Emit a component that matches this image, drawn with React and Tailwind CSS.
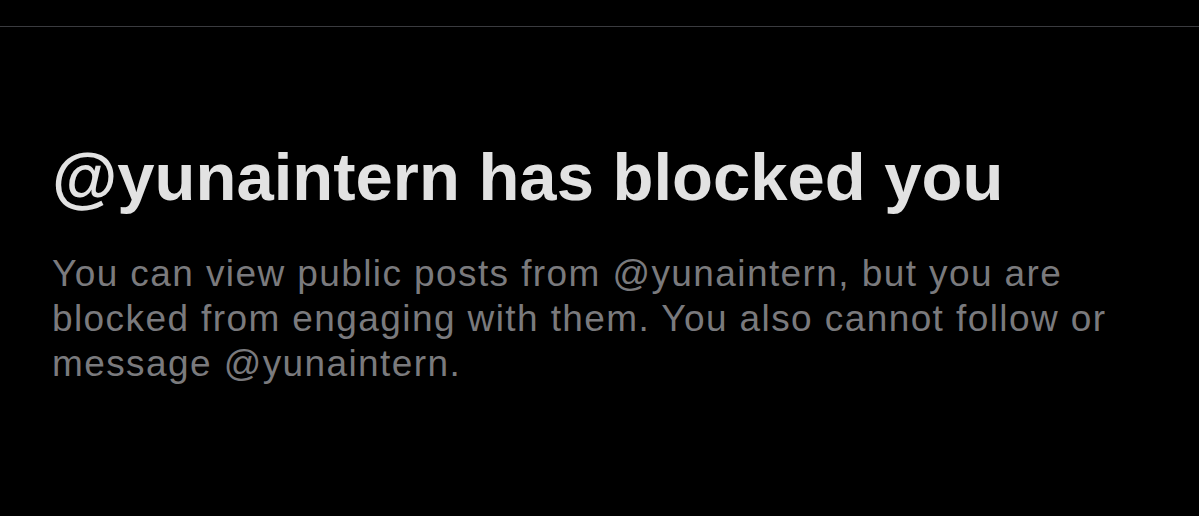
export default function App() {
  return (
    <div className="min-h-[516px] w-full bg-black font-['Liberation_Sans',Arial,sans-serif]">
      <div className="h-[26px]" />
      <div className="border-t border-[#3a3b3f]">
        <div className="pl-[52px] pr-[60px] pt-[110px]">
          <h1 className="text-[67px] font-bold leading-[80px] text-[#e2e2e2]">
            @yunaintern has blocked you
          </h1>
          <p className="mt-[34px] max-w-[1090px] text-[37px] leading-[45px] tracking-[0.038em] text-[#7a7a7d]">
            You can view public posts from @yunaintern, but you are blocked from engaging with them. You also cannot follow or message @yunaintern.
          </p>
        </div>
      </div>
    </div>
  );
}
